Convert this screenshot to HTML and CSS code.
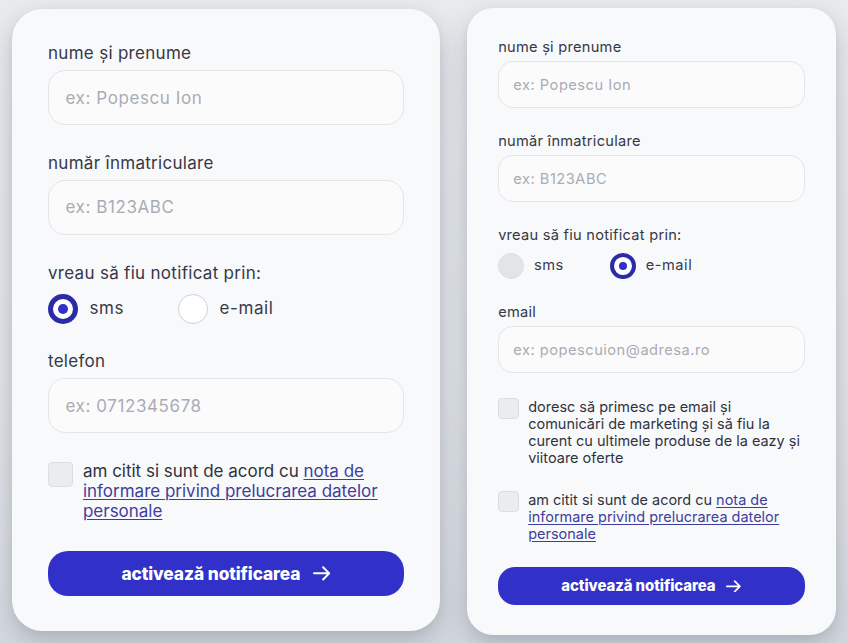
FILE: index.html
```html
<!DOCTYPE html>
<html lang="ro">
<head>
<meta charset="utf-8">
<title>Notificare</title>
<link rel="stylesheet" href="styles.css">
</head>
<body>
<div class="stage">
  <form class="card card-lg">
    <div class="field">
      <label class="label">nume și prenume</label>
      <input class="input" type="text" placeholder="ex: Popescu Ion">
    </div>
    <div class="field">
      <label class="label">număr înmatriculare</label>
      <input class="input" type="text" placeholder="ex: B123ABC">
    </div>
    <div class="field">
      <span class="label">vreau să fiu notificat prin:</span>
      <div class="options">
        <div class="option"><span class="radio on"></span><span class="opt-text">sms</span></div>
        <div class="option"><span class="radio off"></span><span class="opt-text">e-mail</span></div>
      </div>
    </div>
    <div class="field">
      <label class="label">telefon</label>
      <input class="input" type="text" placeholder="ex: 0712345678">
    </div>
    <div class="check">
      <span class="box"></span>
      <p class="check-text">am citit si sunt de acord cu <a href="#">nota de informare privind prelucrarea datelor personale</a></p>
    </div>
    <button type="button" class="btn">activează notificarea
      <svg class="arrow" viewBox="0 0 18 14" width="18" height="14"><path d="M1 7h15M10 1l6 6-6 6" fill="none" stroke="#fff" stroke-width="2" stroke-linecap="round" stroke-linejoin="round"/></svg>
    </button>
  </form>

  <form class="card card-sm">
    <div class="field">
      <label class="label">nume și prenume</label>
      <input class="input" type="text" placeholder="ex: Popescu Ion">
    </div>
    <div class="field">
      <label class="label">număr înmatriculare</label>
      <input class="input" type="text" placeholder="ex: B123ABC">
    </div>
    <div class="field">
      <span class="label">vreau să fiu notificat prin:</span>
      <div class="options">
        <div class="option"><span class="radio gray"></span><span class="opt-text">sms</span></div>
        <div class="option"><span class="radio on"></span><span class="opt-text">e-mail</span></div>
      </div>
    </div>
    <div class="field">
      <label class="label">email</label>
      <input class="input" type="text" placeholder="ex: popescuion@adresa.ro">
    </div>
    <div class="check">
      <span class="box"></span>
      <p class="check-text">doresc să primesc pe email și comunicări de marketing și să fiu la curent cu ultimele produse de la eazy și viitoare oferte</p>
    </div>
    <div class="check">
      <span class="box"></span>
      <p class="check-text">am citit si sunt de acord cu <a href="#">nota de informare privind prelucrarea datelor personale</a></p>
    </div>
    <button type="button" class="btn">activează notificarea
      <svg class="arrow" viewBox="0 0 18 14" width="18" height="14"><path d="M1 7h15M10 1l6 6-6 6" fill="none" stroke="#fff" stroke-width="2" stroke-linecap="round" stroke-linejoin="round"/></svg>
    </button>
  </form>
</div>
</body>
</html>
```

FILE: styles.css
```css
* { box-sizing: border-box; }

html, body {
  margin: 0;
  height: 100%;
}

body {
  background: linear-gradient(180deg, #e9ebee 0%, #e2e5e9 60%, #d6dae0 100%);
  font-family: Inter, "Noto Sans", sans-serif;
  color: #383a4a;
  overflow: hidden;
}

.stage {
  display: flex;
  align-items: flex-start;
  gap: 27px;
  padding: 9px 0 0 12px;
}

.card {
  width: 25.95em;
  padding: 2.15em 2.18em 2.12em;
  background: #f8f9fb;
  border-radius: 1.85em;
  box-shadow: 0 12px 28px rgba(110, 118, 135, 0.38), 0 2px 6px rgba(120, 128, 145, 0.12);
  display: flex;
  flex-direction: column;
  gap: 1.75em;
}

.card-lg { font-size: 16.5px; --ct: 1.03em; }
.card-sm { font-size: 14.2px; margin-top: -1px; --ct: 1.02em; }

.field {
  display: flex;
  flex-direction: column;
}

.label {
  font-size: 1.03em;
  line-height: 1.165;
  font-weight: 420;
  letter-spacing: 0.018em;
  color: #363846;
}

.input {
  margin-top: 0.36em;
  height: 3.33em;
  width: 100%;
  border: 1.5px solid #e3e5e9;
  border-radius: 1.05em;
  background: #fbfbfc;
  padding: 0 1.0em;
  font-family: Inter, "Noto Sans", sans-serif;
  font-size: 1em;
  color: #383a4a;
  outline: none;
}

.input::placeholder {
  color: #a9acb4;
  opacity: 1;
  font-size: 1.03em;
  letter-spacing: 0.035em;
}

.options {
  display: flex;
  margin-top: 0.62em;
}

.option {
  display: flex;
  align-items: center;
  gap: 0.7em;
  width: 7.88em;
}

.opt-text {
  font-size: 1.03em;
  line-height: 1.2;
  letter-spacing: 0.035em;
  color: #383a4a;
}

.radio {
  flex: none;
  width: 1.82em;
  height: 1.82em;
  border-radius: 50%;
  display: grid;
  place-items: center;
}

.radio.on {
  border: 0.34em solid #2b2ba8;
  background: #fff;
}

.radio.on::after {
  content: "";
  width: 0.6em;
  height: 0.6em;
  border-radius: 50%;
  background: #3131c9;
}

.radio.off {
  border: 1.5px solid #cfd1d6;
  background: #fff;
}

.radio.gray {
  border: 1px solid #dfe0e4;
  background: #e3e4e8;
}

.check {
  display: flex;
  align-items: flex-start;
  gap: 0.62em;
}

.box {
  flex: none;
  width: 1.5em;
  height: 1.5em;
  border-radius: 0.28em;
  border: 1px solid #dcdde2;
  background: #ebecef;
}

.check-text {
  margin: 0;
  font-size: var(--ct);
  line-height: 1.175;
  color: #30323f;
}

.check-text a {
  color: #3e3e9c;
  text-decoration: underline;
  text-underline-offset: 2px;
  text-decoration-thickness: 1px;
}

.btn {
  height: 2.6em;
  width: 100%;
  border: none;
  border-radius: 1.15em;
  background: #3131c9;
  color: #fff;
  font-family: Inter, "Noto Sans", sans-serif;
  font-weight: 800;
  font-size: 1.05em;
  letter-spacing: -0.005em;
  display: flex;
  align-items: center;
  justify-content: center;
  gap: 0.7em;
  cursor: pointer;
}

.arrow {
  width: 1.05em;
  height: 0.85em;
}
```
